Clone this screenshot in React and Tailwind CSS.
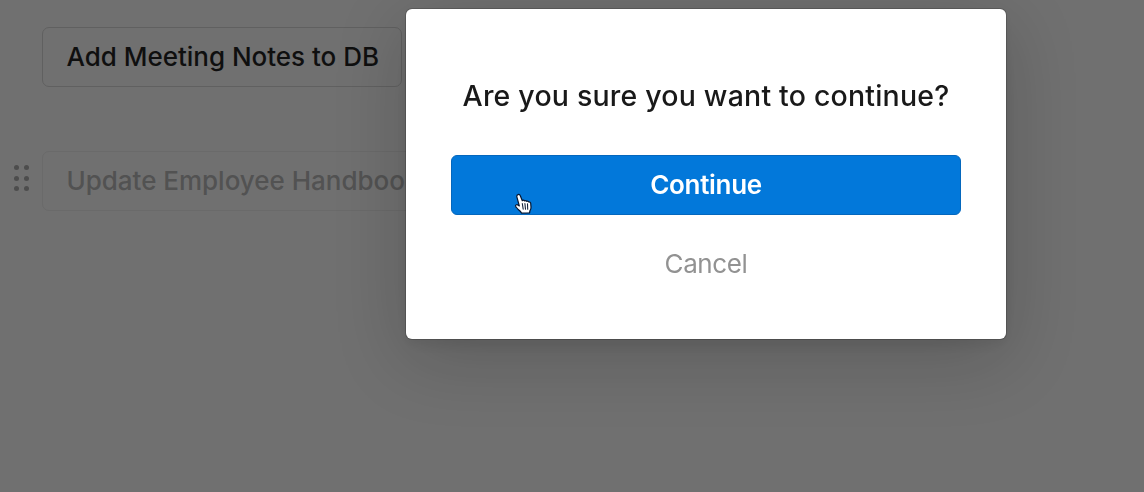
const cards = [
  { label: 'Add Meeting Notes to DB', dragging: false },
  { label: 'Update Employee Handbook', dragging: true },
];

function DragHandle() {
  return (
    <div className="grid w-4 grid-cols-[5px_5px] gap-x-[5.6px] gap-y-[5.4px]">
      {[0, 1, 2, 3, 4, 5].map(dot => (
        <span key={dot} className="size-[5px] rounded-full bg-[#4d4d4d]" />
      ))}
    </div>
  );
}

function TemplateButton({ label, dragging }) {
  return (
    <div className="flex items-center">
      <div className="w-[42px] shrink-0 pl-[13.5px] pb-1.5">
        {dragging && <DragHandle />}
      </div>
      <button
        className={`h-[60px] rounded-[7px] border pr-[22px] pl-[23.5px] pb-[2px] text-[26px] font-medium tracking-[-0.02px] whitespace-nowrap ${
          dragging ? 'border-[#6a6a6a] text-[#525252]' : 'border-[#606060] text-[#0f0f0f]'
        }`}
      >
        {label}
      </button>
    </div>
  );
}

function HandCursor() {
  return (
    <svg className="absolute left-[63px] top-[38px]" width="18" height="22" viewBox="0 0 18 22">
      <path
        d="M4 1.6c1-.4 1.9.1 2.3 1.1l2 5c.7-.6 1.7-.5 2.3.2.8-.5 1.7-.3 2.2.4.8-.4 1.7 0 2.1.8.9-.3 1.7.2 1.8 1.2l.3 3.8c.1 1.5-.4 2.8-1.1 3.8l-.3 1.9-7.9.4c-1-1.8-2.2-3-4-4.3C2.3 14.800 1.300 13.800 1.500 12.700c.3-1.200 1.700-1.200 2.800-.5l1 .7L3 4.400C2.500 3.200 2.900 2 4 1.600z"
        fill="#fff"
        stroke="#06152e"
        strokeWidth="1.2"
        strokeLinejoin="round"
      />
      <path d="M8.300 10.500l.9 5.700M10.900 10.500l.6 5.700M13.500 10.700l.2 5.500" stroke="#14233c" strokeWidth="1.1" strokeLinecap="round" />
    </svg>
  );
}

function ConfirmDialog() {
  return (
    <div className="fixed inset-0 flex items-start pl-[406px] pt-[9px]">
      <div className="h-[330px] w-[600px] shrink-0 rounded-[6px] bg-white px-[45px] pt-[66px] text-center shadow-[0_0_0_1px_rgba(15,15,15,0.2),0_6px_12px_rgba(15,15,15,0.06),0_18px_72px_rgba(15,15,15,0.2)]">
        <h2 className="-mx-5 h-[60px] text-[28.5px] leading-[42px] font-medium tracking-[0.2px] whitespace-nowrap text-[#191919]">
          Are you sure you want to continue?
        </h2>
        <div className="relative mt-5">
          <button className="h-[60px] w-full rounded-[6px] border border-[#0467bd] bg-[#0278da] pb-[2px] text-[26px] font-semibold tracking-[-0.3px] text-white">
            Continue
          </button>
          <HandCursor />
        </div>
        <button className="mt-[19px] h-[60px] w-full pb-[2px] text-[26px] tracking-[-0.4px] text-[#929292]">Cancel</button>
      </div>
    </div>
  );
}

export default function App() {
  return (
    <div className="h-screen overflow-hidden bg-[#707070] font-['Inter','Liberation_Sans',sans-serif]">
      <div className="flex flex-col gap-16 pt-[27px]">
        {cards.map(card => (
          <TemplateButton key={card.label} {...card} />
        ))}
      </div>
      <ConfirmDialog />
    </div>
  );
}
